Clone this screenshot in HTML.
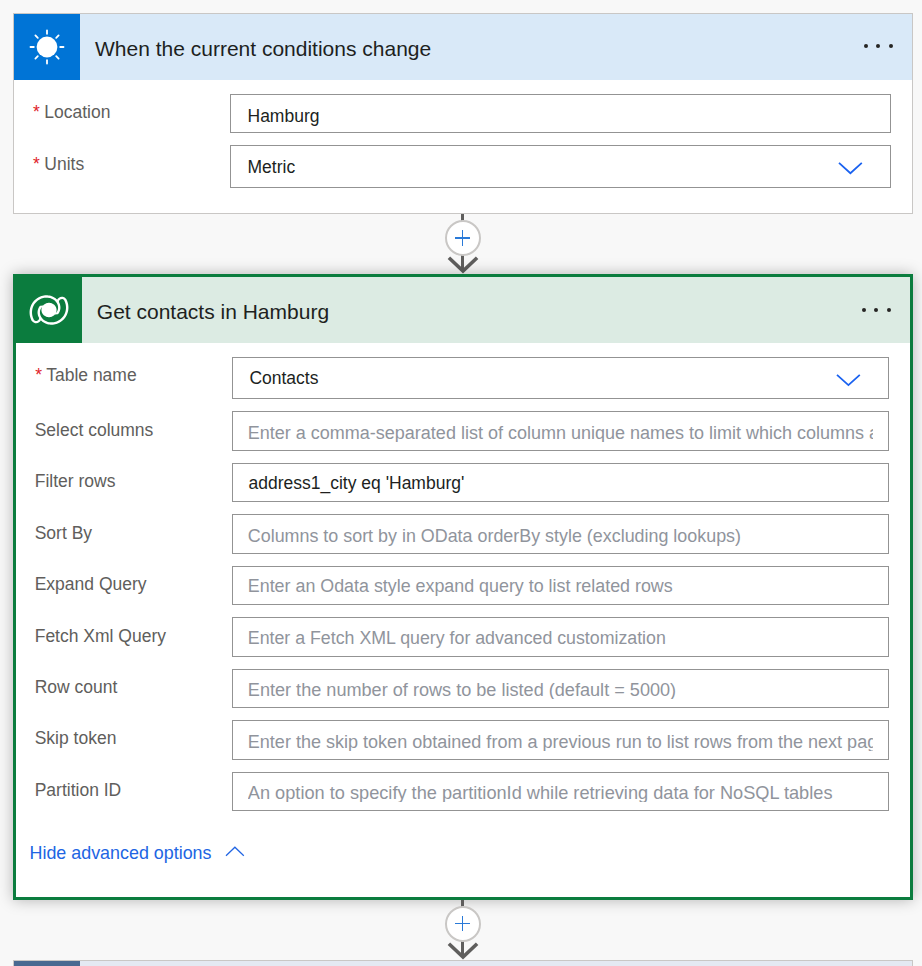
<!DOCTYPE html>
<html><head><meta charset="utf-8">
<style>
*{margin:0;padding:0;box-sizing:border-box}
html,body{width:922px;height:966px;overflow:hidden;background:#f8f8f8;font-family:"Liberation Sans",sans-serif;position:relative}
.abs{position:absolute}
.t{white-space:nowrap;line-height:1}
.title{color:#201f1e}
.lbl{color:#605e5c}
.req{color:#e0222a}
.val{color:#201f1e}
.ph{color:#90949c;overflow:hidden}
.link{color:#2165e3}
.inp{border:1px solid #939393;background:#fff}
.dot{width:4.2px;height:4.2px;border-radius:50%;background:#262524}
</style></head><body>
<div class="abs" style="left:13px;top:13px;width:900px;height:201px;border:1px solid #c9c7c5;background:#fff"></div>
<div class="abs" style="left:14px;top:14px;width:898px;height:66px;background:#d9e9f8"></div>
<div class="abs" style="left:14px;top:14px;width:66px;height:66px;background:#0074d6"></div>
<svg class="abs" style="left:14.3px;top:14.3px" width="66" height="66" viewBox="0 0 66 66">
  <circle cx="33" cy="33" r="10.4" fill="#fff"/>
  <g stroke="#fff" stroke-width="1.8" stroke-linecap="round">
    <line x1="33" y1="16.5" x2="33" y2="19.8"/>
    <line x1="33" y1="46.2" x2="33" y2="49.5"/>
    <line x1="16.5" y1="33" x2="19.8" y2="33"/>
    <line x1="46.2" y1="33" x2="49.5" y2="33"/>
    <line x1="21.4" y1="21.4" x2="23.8" y2="23.8"/>
    <line x1="42.2" y1="42.2" x2="44.6" y2="44.6"/>
    <line x1="21.4" y1="44.6" x2="23.8" y2="42.2"/>
    <line x1="42.2" y1="23.8" x2="44.6" y2="21.4"/>
  </g>
</svg>
<div class="abs t title" style="left:95px;top:38.12px;font-size:21px;">When the current conditions change</div>
<div class="abs dot" style="left:863.6999999999999px;top:44.3px"></div>
<div class="abs dot" style="left:876.1999999999999px;top:44.3px"></div>
<div class="abs dot" style="left:888.6999999999999px;top:44.3px"></div>
<div class="abs t req" style="left:33.0px;top:104.19px;font-size:17.5px;">*</div>
<div class="abs t lbl" style="left:44.3px;top:104.19px;font-size:17.5px;">Location</div>
<div class="abs inp" style="left:230px;top:94px;width:661px;height:39px"></div>
<div class="abs t val" style="left:247.5px;top:107.69px;font-size:17.5px;">Hamburg</div>
<div class="abs t req" style="left:33.0px;top:156.19px;font-size:17.5px;">*</div>
<div class="abs t lbl" style="left:44.3px;top:156.19px;font-size:17.5px;">Units</div>
<div class="abs inp" style="left:230px;top:145px;width:661px;height:43px"></div>
<div class="abs t val" style="left:247.5px;top:158.99px;font-size:17.5px;">Metric</div>
<svg class="abs" style="left:837.2px;top:159.6px" width="26.799999999999955" height="16.099999999999994" viewBox="0 0 26.799999999999955 16.099999999999994"><polyline points="2,2.9 13.399999999999977,13.199999999999994 24.799999999999955,2.9" fill="none" stroke="#1a62f0" stroke-width="1.8"/></svg>
<div class="abs" style="left:461.2px;top:214px;width:3px;height:24px;background:#5f5e5d"></div>
<div class="abs" style="left:461.2px;top:238px;width:3px;height:32px;background:#5f5e5d"></div>
<svg class="abs" style="left:442.7px;top:252px" width="40" height="22" viewBox="0 0 40 22"><polyline points="5.9,5.8 20,19 34.1,5.8" fill="none" stroke="#5f5e5d" stroke-width="3.6"/></svg>
<div class="abs" style="left:444.7px;top:220px;width:36px;height:36px;border-radius:50%;border:2.6px solid #c9c7c5;background:#fff"></div>
<div class="abs" style="left:454.95px;top:237.3px;width:15.5px;height:1.4px;background:#2a7ad8"></div>
<div class="abs" style="left:462.0px;top:230.25px;width:1.4px;height:15.5px;background:#2a7ad8"></div>
<div class="abs" style="left:13px;top:274px;width:900px;height:626px;border:3px solid #0b7c3e;background:#fff;box-shadow:0 0 14px rgba(0,0,0,0.28)"></div>
<div class="abs" style="left:16px;top:277px;width:894px;height:66px;background:#dcebe3"></div>
<div class="abs" style="left:13px;top:274px;width:69px;height:69px;background:#0b7c3e"></div>
<svg class="abs" style="left:24px;top:285px" width="50" height="50" viewBox="-25 -25 50 50"><g transform="scale(1.02,0.97)">
  <g fill="#fff" stroke="#fff" stroke-width="4.8" stroke-linejoin="round">
    <path d="M6.65,3.24 L7.02,2.84 L7.37,2.40 L7.69,1.92 L7.98,1.41 L8.23,0.87 L8.45,0.30 L8.63,-0.30 L8.76,-0.92 L8.85,-1.56 L8.89,-2.22 L8.88,-2.88 L8.82,-3.56 L8.71,-4.25 L8.54,-4.93 L8.32,-5.61 L8.05,-6.29 L7.72,-6.95 L7.34,-7.60 L6.91,-8.23 L6.42,-8.83 L5.88,-9.41 L5.29,-9.95 L4.66,-10.46 L3.98,-10.92 L3.25,-11.34 L2.49,-11.71 L1.69,-12.03 L0.86,-12.30 L0.00,-12.50 L-0.88,-12.65 L-1.79,-12.73 L-2.71,-12.75 L-3.64,-12.70 L-4.58,-12.58 L-5.52,-12.39 L-6.45,-12.13 L-7.37,-11.80 L-8.28,-11.40 L-9.17,-10.93 L-10.03,-10.39 L-10.86,-9.78 L-11.66,-9.11 L-12.41,-8.37 L-13.12,-7.57 L-13.77,-6.72 L-14.37,-5.80 L-14.90,-4.84 L-15.38,-3.83 L-15.78,-2.78 L-16.11,-1.69 L-16.37,-0.57 L-16.54,0.58 L-16.64,1.75 L-16.65,2.94 L-16.57,4.13 L-16.41,5.33 L-16.16,6.53 L-15.83,7.72 L-15.40,8.89 L-14.89,10.04 A2.76,2.76 0 0 0 -10.31,6.96 L-10.31,6.96 L-10.62,6.13 L-10.86,5.30 L-11.04,4.46 L-11.16,3.63 L-11.22,2.80 L-11.21,1.98 L-11.15,1.17 L-11.03,0.39 L-10.85,-0.38 L-10.62,-1.12 L-10.34,-1.82 L-10.02,-2.50 L-9.66,-3.14 L-9.25,-3.74 L-8.81,-4.30 L-7.79,-4.50 L-6.80,-4.59 L-5.83,-4.56 L-5.50,-4.95 L-5.14,-5.32 L-4.76,-5.67 L-4.35,-5.99 L-3.92,-6.28 L-3.47,-6.53 L-3.01,-6.76 L-2.53,-6.95 L-2.04,-7.11 L-1.54,-7.24 L-1.03,-7.33 L-0.52,-7.38 L0.00,-7.40 L0.52,-7.38 L1.03,-7.33 L1.54,-7.24 L2.04,-7.11 L2.53,-6.95 L3.01,-6.76 L3.47,-6.53 L3.92,-6.28 L4.35,-5.99 L4.76,-5.67 L5.14,-5.32 L5.50,-4.95 L5.83,-4.56 L6.13,-4.14 L6.41,-3.70 L6.65,-3.24 L6.86,-2.77 L7.04,-2.29 L7.18,-1.79 L7.29,-1.28 L7.36,-0.77 L7.40,-0.26 L7.40,0.26 L7.36,0.77 L7.29,1.28 L7.18,1.79 L7.04,2.29 L6.86,2.77 L6.65,3.24 Z"/><path d="M-6.65,-3.24 L-7.02,-2.84 L-7.37,-2.40 L-7.69,-1.92 L-7.98,-1.41 L-8.23,-0.87 L-8.45,-0.30 L-8.63,0.30 L-8.76,0.92 L-8.85,1.56 L-8.89,2.22 L-8.88,2.88 L-8.82,3.56 L-8.71,4.25 L-8.54,4.93 L-8.32,5.61 L-8.05,6.29 L-7.72,6.95 L-7.34,7.60 L-6.91,8.23 L-6.42,8.83 L-5.88,9.41 L-5.29,9.95 L-4.66,10.46 L-3.98,10.92 L-3.25,11.34 L-2.49,11.71 L-1.69,12.03 L-0.86,12.30 L0.00,12.50 L0.88,12.65 L1.79,12.73 L2.71,12.75 L3.64,12.70 L4.58,12.58 L5.52,12.39 L6.45,12.13 L7.37,11.80 L8.28,11.40 L9.17,10.93 L10.03,10.39 L10.86,9.78 L11.66,9.11 L12.41,8.37 L13.12,7.57 L13.77,6.72 L14.37,5.80 L14.90,4.84 L15.38,3.83 L15.78,2.78 L16.11,1.69 L16.37,0.57 L16.54,-0.58 L16.64,-1.75 L16.65,-2.94 L16.57,-4.13 L16.41,-5.33 L16.16,-6.53 L15.83,-7.72 L15.40,-8.89 L14.89,-10.04 A2.76,2.76 0 0 0 10.31,-6.96 L10.31,-6.96 L10.62,-6.13 L10.86,-5.30 L11.04,-4.46 L11.16,-3.63 L11.22,-2.80 L11.21,-1.98 L11.15,-1.17 L11.03,-0.39 L10.85,0.38 L10.62,1.12 L10.34,1.82 L10.02,2.50 L9.66,3.14 L9.25,3.74 L8.81,4.30 L7.79,4.50 L6.80,4.59 L5.83,4.56 L5.50,4.95 L5.14,5.32 L4.76,5.67 L4.35,5.99 L3.92,6.28 L3.47,6.53 L3.01,6.76 L2.53,6.95 L2.04,7.11 L1.54,7.24 L1.03,7.33 L0.52,7.38 L0.00,7.40 L-0.52,7.38 L-1.03,7.33 L-1.54,7.24 L-2.04,7.11 L-2.53,6.95 L-3.01,6.76 L-3.47,6.53 L-3.92,6.28 L-4.35,5.99 L-4.76,5.67 L-5.14,5.32 L-5.50,4.95 L-5.83,4.56 L-6.13,4.14 L-6.41,3.70 L-6.65,3.24 L-6.86,2.77 L-7.04,2.29 L-7.18,1.79 L-7.29,1.28 L-7.36,0.77 L-7.40,0.26 L-7.40,-0.26 L-7.36,-0.77 L-7.29,-1.28 L-7.18,-1.79 L-7.04,-2.29 L-6.86,-2.77 L-6.65,-3.24 Z"/>
  </g>
  <circle cx="0" cy="0" r="8.3" fill="#fff"/>
  <g fill="#0b7c3e"><path d="M6.65,3.24 L7.02,2.84 L7.37,2.40 L7.69,1.92 L7.98,1.41 L8.23,0.87 L8.45,0.30 L8.63,-0.30 L8.76,-0.92 L8.85,-1.56 L8.89,-2.22 L8.88,-2.88 L8.82,-3.56 L8.71,-4.25 L8.54,-4.93 L8.32,-5.61 L8.05,-6.29 L7.72,-6.95 L7.34,-7.60 L6.91,-8.23 L6.42,-8.83 L5.88,-9.41 L5.29,-9.95 L4.66,-10.46 L3.98,-10.92 L3.25,-11.34 L2.49,-11.71 L1.69,-12.03 L0.86,-12.30 L0.00,-12.50 L-0.88,-12.65 L-1.79,-12.73 L-2.71,-12.75 L-3.64,-12.70 L-4.58,-12.58 L-5.52,-12.39 L-6.45,-12.13 L-7.37,-11.80 L-8.28,-11.40 L-9.17,-10.93 L-10.03,-10.39 L-10.86,-9.78 L-11.66,-9.11 L-12.41,-8.37 L-13.12,-7.57 L-13.77,-6.72 L-14.37,-5.80 L-14.90,-4.84 L-15.38,-3.83 L-15.78,-2.78 L-16.11,-1.69 L-16.37,-0.57 L-16.54,0.58 L-16.64,1.75 L-16.65,2.94 L-16.57,4.13 L-16.41,5.33 L-16.16,6.53 L-15.83,7.72 L-15.40,8.89 L-14.89,10.04 A2.76,2.76 0 0 0 -10.31,6.96 L-10.31,6.96 L-10.62,6.13 L-10.86,5.30 L-11.04,4.46 L-11.16,3.63 L-11.22,2.80 L-11.21,1.98 L-11.15,1.17 L-11.03,0.39 L-10.85,-0.38 L-10.62,-1.12 L-10.34,-1.82 L-10.02,-2.50 L-9.66,-3.14 L-9.25,-3.74 L-8.81,-4.30 L-7.79,-4.50 L-6.80,-4.59 L-5.83,-4.56 L-5.50,-4.95 L-5.14,-5.32 L-4.76,-5.67 L-4.35,-5.99 L-3.92,-6.28 L-3.47,-6.53 L-3.01,-6.76 L-2.53,-6.95 L-2.04,-7.11 L-1.54,-7.24 L-1.03,-7.33 L-0.52,-7.38 L0.00,-7.40 L0.52,-7.38 L1.03,-7.33 L1.54,-7.24 L2.04,-7.11 L2.53,-6.95 L3.01,-6.76 L3.47,-6.53 L3.92,-6.28 L4.35,-5.99 L4.76,-5.67 L5.14,-5.32 L5.50,-4.95 L5.83,-4.56 L6.13,-4.14 L6.41,-3.70 L6.65,-3.24 L6.86,-2.77 L7.04,-2.29 L7.18,-1.79 L7.29,-1.28 L7.36,-0.77 L7.40,-0.26 L7.40,0.26 L7.36,0.77 L7.29,1.28 L7.18,1.79 L7.04,2.29 L6.86,2.77 L6.65,3.24 Z"/><path d="M-6.65,-3.24 L-7.02,-2.84 L-7.37,-2.40 L-7.69,-1.92 L-7.98,-1.41 L-8.23,-0.87 L-8.45,-0.30 L-8.63,0.30 L-8.76,0.92 L-8.85,1.56 L-8.89,2.22 L-8.88,2.88 L-8.82,3.56 L-8.71,4.25 L-8.54,4.93 L-8.32,5.61 L-8.05,6.29 L-7.72,6.95 L-7.34,7.60 L-6.91,8.23 L-6.42,8.83 L-5.88,9.41 L-5.29,9.95 L-4.66,10.46 L-3.98,10.92 L-3.25,11.34 L-2.49,11.71 L-1.69,12.03 L-0.86,12.30 L0.00,12.50 L0.88,12.65 L1.79,12.73 L2.71,12.75 L3.64,12.70 L4.58,12.58 L5.52,12.39 L6.45,12.13 L7.37,11.80 L8.28,11.40 L9.17,10.93 L10.03,10.39 L10.86,9.78 L11.66,9.11 L12.41,8.37 L13.12,7.57 L13.77,6.72 L14.37,5.80 L14.90,4.84 L15.38,3.83 L15.78,2.78 L16.11,1.69 L16.37,0.57 L16.54,-0.58 L16.64,-1.75 L16.65,-2.94 L16.57,-4.13 L16.41,-5.33 L16.16,-6.53 L15.83,-7.72 L15.40,-8.89 L14.89,-10.04 A2.76,2.76 0 0 0 10.31,-6.96 L10.31,-6.96 L10.62,-6.13 L10.86,-5.30 L11.04,-4.46 L11.16,-3.63 L11.22,-2.80 L11.21,-1.98 L11.15,-1.17 L11.03,-0.39 L10.85,0.38 L10.62,1.12 L10.34,1.82 L10.02,2.50 L9.66,3.14 L9.25,3.74 L8.81,4.30 L7.79,4.50 L6.80,4.59 L5.83,4.56 L5.50,4.95 L5.14,5.32 L4.76,5.67 L4.35,5.99 L3.92,6.28 L3.47,6.53 L3.01,6.76 L2.53,6.95 L2.04,7.11 L1.54,7.24 L1.03,7.33 L0.52,7.38 L0.00,7.40 L-0.52,7.38 L-1.03,7.33 L-1.54,7.24 L-2.04,7.11 L-2.53,6.95 L-3.01,6.76 L-3.47,6.53 L-3.92,6.28 L-4.35,5.99 L-4.76,5.67 L-5.14,5.32 L-5.50,4.95 L-5.83,4.56 L-6.13,4.14 L-6.41,3.70 L-6.65,3.24 L-6.86,2.77 L-7.04,2.29 L-7.18,1.79 L-7.29,1.28 L-7.36,0.77 L-7.40,0.26 L-7.40,-0.26 L-7.36,-0.77 L-7.29,-1.28 L-7.18,-1.79 L-7.04,-2.29 L-6.86,-2.77 L-6.65,-3.24 Z"/></g></g>
</svg>
<div class="abs t title" style="left:96.8px;top:301.32px;font-size:21px;">Get contacts in Hamburg</div>
<div class="abs dot" style="left:861.9px;top:307.5px"></div>
<div class="abs dot" style="left:874.1999999999999px;top:307.5px"></div>
<div class="abs dot" style="left:886.6999999999999px;top:307.5px"></div>
<div class="abs t req" style="left:35.2px;top:366.59px;font-size:17.5px;">*</div>
<div class="abs t lbl" style="left:46.2px;top:366.59px;font-size:17.5px;">Table name</div>
<div class="abs inp" style="left:232px;top:357px;width:657px;height:42px"></div>
<div class="abs t val" style="left:249.4px;top:370.09px;font-size:17.5px;">Contacts</div>
<svg class="abs" style="left:835px;top:371.6px" width="26.799999999999955" height="16.0" viewBox="0 0 26.799999999999955 16.0"><polyline points="2,2.9 13.399999999999977,13.1 24.799999999999955,2.9" fill="none" stroke="#1a62f0" stroke-width="1.8"/></svg>
<div class="abs t lbl" style="left:34.7px;top:422.29px;font-size:17.5px;">Select columns</div>
<div class="abs inp" style="left:232px;top:411px;width:657px;height:40px"></div>
<div class="abs t ph" style="left:247.8px;top:424.36px;font-size:18px;width:625.5px;">Enter a comma-separated list of column unique names to limit which columns are selected</div>
<div class="abs t lbl" style="left:34.7px;top:472.69px;font-size:17.5px;">Filter rows</div>
<div class="abs inp" style="left:232px;top:463px;width:657px;height:39px"></div>
<div class="abs t val" style="left:248.5px;top:475.49px;font-size:17.5px;">address1_city eq 'Hamburg'</div>
<div class="abs t lbl" style="left:34.7px;top:525.09px;font-size:17.5px;">Sort By</div>
<div class="abs inp" style="left:232px;top:514px;width:657px;height:40px"></div>
<div class="abs t ph" style="left:247.8px;top:527.75px;font-size:17.9px;width:625.5px;">Columns to sort by in OData orderBy style (excluding lookups)</div>
<div class="abs t lbl" style="left:34.7px;top:575.69px;font-size:17.5px;">Expand Query</div>
<div class="abs inp" style="left:232px;top:566px;width:657px;height:39px"></div>
<div class="abs t ph" style="left:247.8px;top:578.37px;font-size:17.87px;width:625.5px;">Enter an Odata style expand query to list related rows</div>
<div class="abs t lbl" style="left:34.7px;top:627.99px;font-size:17.5px;">Fetch Xml Query</div>
<div class="abs inp" style="left:232px;top:617px;width:657px;height:40px"></div>
<div class="abs t ph" style="left:247.8px;top:630.45px;font-size:17.78px;width:625.5px;">Enter a Fetch XML query for advanced customization</div>
<div class="abs t lbl" style="left:34.7px;top:678.69px;font-size:17.5px;">Row count</div>
<div class="abs inp" style="left:232px;top:669px;width:657px;height:39px"></div>
<div class="abs t ph" style="left:247.8px;top:681.15px;font-size:18.13px;width:625.5px;">Enter the number of rows to be listed (default = 5000)</div>
<div class="abs t lbl" style="left:34.7px;top:730.39px;font-size:17.5px;">Skip token</div>
<div class="abs inp" style="left:232px;top:720px;width:657px;height:40px"></div>
<div class="abs t ph" style="left:247.8px;top:732.72px;font-size:18.05px;width:625.5px;">Enter the skip token obtained from a previous run to list rows from the next page</div>
<div class="abs t lbl" style="left:34.7px;top:781.59px;font-size:17.5px;">Partition ID</div>
<div class="abs inp" style="left:232px;top:772px;width:657px;height:39px"></div>
<div class="abs t ph" style="left:247.8px;top:784.10px;font-size:18.19px;width:625.5px;">An option to specify the partitionId while retrieving data for NoSQL tables</div>
<div class="abs t link" style="left:29.5px;top:844.95px;font-size:17.9px;">Hide advanced options</div>
<svg class="abs" style="left:223.6px;top:844.9px" width="22" height="13" viewBox="0 0 22 13"><polyline points="2,10.8 10.9,2.2 19.8,10.8" fill="none" stroke="#2165e3" stroke-width="1.25"/></svg>
<div class="abs" style="left:461.2px;top:900px;width:3px;height:23.5px;background:#5f5e5d"></div>
<div class="abs" style="left:461.2px;top:923.5px;width:3px;height:32.5px;background:#5f5e5d"></div>
<svg class="abs" style="left:442.7px;top:938px" width="40" height="22" viewBox="0 0 40 22"><polyline points="5.9,5.8 20,19 34.1,5.8" fill="none" stroke="#5f5e5d" stroke-width="3.6"/></svg>
<div class="abs" style="left:444.7px;top:905.5px;width:36px;height:36px;border-radius:50%;border:2.6px solid #c9c7c5;background:#fff"></div>
<div class="abs" style="left:454.95px;top:922.8px;width:15.5px;height:1.4px;background:#2a7ad8"></div>
<div class="abs" style="left:462.0px;top:915.75px;width:1.4px;height:15.5px;background:#2a7ad8"></div>
<div class="abs" style="left:13px;top:960px;width:900px;height:40px;border:1px solid #c9c7c5;background:#e4e9f2"></div>
<div class="abs" style="left:14px;top:961px;width:66px;height:40px;background:#486991"></div>
</body></html>
